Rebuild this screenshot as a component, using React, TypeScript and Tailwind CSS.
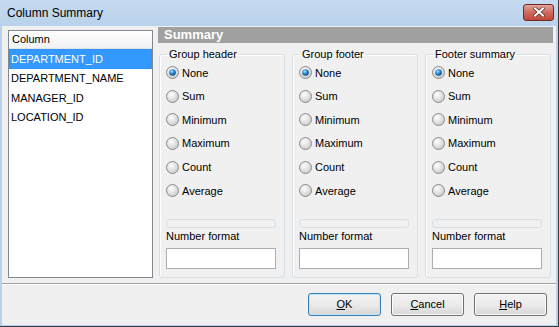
import React from 'react';

const columns = ['DEPARTMENT_ID', 'DEPARTMENT_NAME', 'MANAGER_ID', 'LOCATION_ID'];
const options = ['None', 'Sum', 'Minimum', 'Maximum', 'Count', 'Average'];
const groups = ['Group header', 'Group footer', 'Footer summary'];

function Radio({ checked, id }: { checked: boolean; id: string }) {
  return (
    <svg width="13" height="13" viewBox="0 0 13 13" className="shrink-0">
      <defs>
        <radialGradient id={`rb-${id}`} cx="40%" cy="35%" r="70%">
          <stop offset="0" stopColor="#ffffff" />
          <stop offset="1" stopColor="#c8c8c8" />
        </radialGradient>
        <radialGradient id={`rd-${id}`} cx="40%" cy="35%" r="70%">
          <stop offset="0" stopColor="#a8e4ff" />
          <stop offset="0.5" stopColor="#2a86cf" />
          <stop offset="1" stopColor="#0c3f74" />
        </radialGradient>
      </defs>
      <circle cx="6.5" cy="6.5" r="6" fill={`url(#rb-${id})`} stroke="#8b8b8b" />
      {checked && <circle cx="6.5" cy="6.5" r="3.3" fill={`url(#rd-${id})`} />}
    </svg>
  );
}

function GroupBox({ title, idx }: { title: string; idx: number }) {
  return (
    <fieldset className="w-[125px] h-[230px] border border-[#d5dfe5] rounded-[3px] shadow-[inset_1px_1px_0_#ffffff] pl-[6px] pr-[8px]">
      <legend className="ml-[1px] px-[2px] text-[11px] leading-[13px] text-black">{title}</legend>
      <div className="flex flex-col">
        {options.map((o, i) => (
          <div key={o} className="h-[23.6px] flex items-center gap-[3px] text-[11px] text-black">
            <Radio checked={i === 0} id={`${idx}-${i}`} />
            <span>{o}</span>
          </div>
        ))}
      </div>
      <div className="mt-[16.4px] w-[110px] h-[9px] rounded-[3px] border border-[#d5dfe5] bg-[#f0f0f0]" />
      <div className="mt-[2.5px] text-[11px] leading-[13px] text-black">Number format</div>
      <div className="mt-[4.5px] w-[110px] h-[21px] border border-[#abadb3] bg-white" />
    </fieldset>
  );
}

function Button({ label, primary }: { label: string; primary?: boolean }) {
  return (
    <button
      className={`w-[73px] h-[23px] rounded-[3px] border text-[11px] text-black bg-gradient-to-b from-[#f2f2f2] via-[#ebebeb] to-[#d6d6d6] ${
        primary ? 'border-[#3c7fb1] shadow-[inset_0_0_0_1px_#bde6fd]' : 'border-[#707070] shadow-[inset_0_0_0_1px_#fcfcfc]'
      }`}
    >
      <span className="underline">{label[0]}</span>
      {label.slice(1)}
    </button>
  );
}

export default function App() {
  return (
    <div className="w-[559px] h-[327px] flex flex-col bg-[#b9d1ea] border-r border-b border-[#3a3a3a] font-['Liberation_Sans',Arial,sans-serif] overflow-hidden">
      {/* Title bar */}
      <div className="h-[26px] shrink-0 flex items-center justify-between pl-[7px] pr-[4px] bg-gradient-to-b from-[#c6dbf1] to-[#b9d1ea]">
        <span className="text-[12px] text-black">Column Summary</span>
        <div className="w-[31px] h-[17px] mb-[2px] rounded-[3px] border border-[#6d2a23] bg-gradient-to-b from-[#e3a49b] via-[#cf6a5c] to-[#c1463a] flex items-center justify-center">
          <svg width="12" height="10" viewBox="0 0 12 10">
            <path d="M2 1.5 L10 8.5 M10 1.5 L2 8.5" stroke="#5a2a25" strokeWidth="3.4" strokeLinecap="square" />
            <path d="M2 1.5 L10 8.5 M10 1.5 L2 8.5" stroke="#ffffff" strokeWidth="2" strokeLinecap="square" />
          </svg>
        </div>
      </div>

      {/* Body */}
      <div className="flex-1 ml-[2px] mr-[2px] mb-[1px] bg-[#f0f0f0] flex flex-col">
        <div className="flex gap-[5px] pl-[6px] pr-[3px]">
          {/* Column list */}
          <div className="mt-[4px] w-[145px] h-[248px] border border-[#828790] bg-white text-[11px]">
            <div className="h-[18px] pl-[3px] flex items-center border-b border-[#e3e3e3] bg-gradient-to-b from-white to-[#f1f2f4] text-black">
              Column
            </div>
            {columns.map((c, i) => (
              <div
                key={c}
                className={`h-[19.5px] pl-[2px] flex items-center ${
                  i === 0 ? 'bg-[#3399ff] text-white outline-1 outline-dotted outline-[#b2702a] -outline-offset-1' : 'text-black'
                }`}
              >
                {c}
              </div>
            ))}
          </div>

          {/* Summary panel */}
          <div className="flex-1 mt-[1px]">
            <div className="h-[16px] bg-[#a0a0a0] pl-[6px] flex items-center text-[13px] font-bold text-white">Summary</div>
            <div className="mt-[5px] ml-[1px] flex gap-[7px]">
              {groups.map((g, i) => (
                <GroupBox key={g} title={g} idx={i} />
              ))}
            </div>
          </div>
        </div>

        <div className="mt-[5px] h-[2px] border-t border-[#a0a0a0] border-b border-b-white" />

        <div className="mt-[8px] pr-[9px] flex justify-end gap-[10px]">
          <Button label="OK" primary />
          <Button label="Cancel" />
          <Button label="Help" />
        </div>
      </div>
    </div>
  );
}
